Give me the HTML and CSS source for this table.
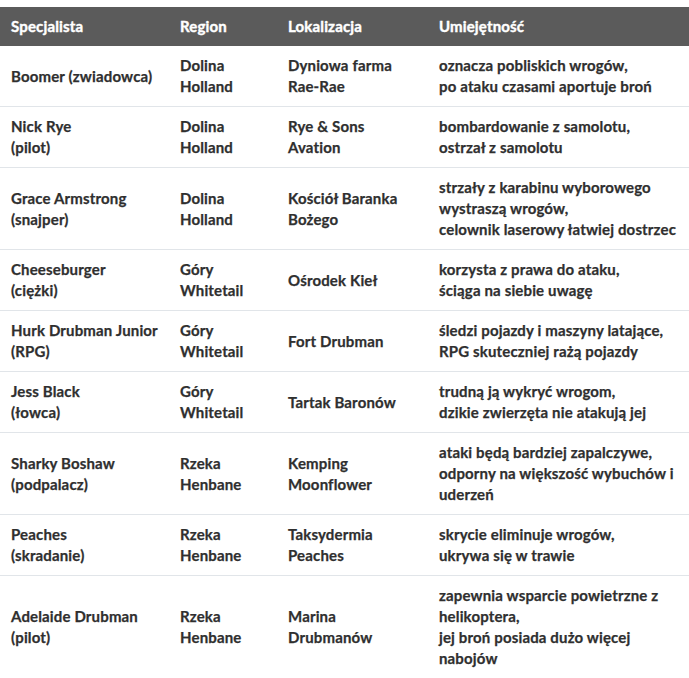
FILE: index.html
```html
<!DOCTYPE html>
<html lang="pl">
<head>
<meta charset="utf-8">
<link rel="stylesheet" href="styles.css">
</head>
<body>
<div class="page">
<table class="specs">
  <colgroup>
    <col class="c1"><col class="c2"><col class="c3"><col class="c4">
  </colgroup>
  <thead>
    <tr><th>Specjalista</th><th>Region</th><th>Lokalizacja</th><th>Umiejętność</th></tr>
  </thead>
  <tbody>
    <tr><td>Boomer (zwiadowca)</td><td>Dolina<br>Holland</td><td>Dyniowa farma<br>Rae-Rae</td><td>oznacza pobliskich wrogów,<br>po ataku czasami aportuje broń</td></tr>
    <tr><td>Nick Rye<br>(pilot)</td><td>Dolina<br>Holland</td><td>Rye &amp; Sons<br>Avation</td><td>bombardowanie z samolotu,<br>ostrzał z samolotu</td></tr>
    <tr><td>Grace Armstrong<br>(snajper)</td><td>Dolina<br>Holland</td><td>Kościół Baranka<br>Bożego</td><td>strzały z karabinu wyborowego<br>wystraszą wrogów,<br>celownik laserowy łatwiej dostrzec</td></tr>
    <tr><td>Cheeseburger<br>(ciężki)</td><td>Góry<br>Whitetail</td><td>Ośrodek Kieł</td><td>korzysta z prawa do ataku,<br>ściąga na siebie uwagę</td></tr>
    <tr><td>Hurk Drubman Junior<br>(RPG)</td><td>Góry<br>Whitetail</td><td>Fort Drubman</td><td>śledzi pojazdy i maszyny latające,<br>RPG skuteczniej rażą pojazdy</td></tr>
    <tr><td>Jess Black<br>(łowca)</td><td>Góry<br>Whitetail</td><td>Tartak Baronów</td><td>trudną ją wykryć wrogom,<br>dzikie zwierzęta nie atakują jej</td></tr>
    <tr><td>Sharky Boshaw<br>(podpalacz)</td><td>Rzeka<br>Henbane</td><td>Kemping<br>Moonflower</td><td>ataki będą bardziej zapalczywe,<br>odporny na większość wybuchów i uderzeń</td></tr>
    <tr><td>Peaches<br>(skradanie)</td><td>Rzeka<br>Henbane</td><td>Taksydermia<br>Peaches</td><td>skrycie eliminuje wrogów,<br>ukrywa się w trawie</td></tr>
    <tr><td>Adelaide Drubman<br>(pilot)</td><td>Rzeka<br>Henbane</td><td>Marina<br>Drubmanów</td><td>zapewnia wsparcie powietrzne z helikoptera,<br>jej broń posiada dużo więcej nabojów</td></tr>
  </tbody>
</table>
</div>
</body>
</html>
```
FILE: styles.css
```css
html, body {
  margin: 0;
  padding: 0;
  background: #ffffff;
}
.page {
  padding-top: 7px;
}
.specs {
  width: 689px;
  table-layout: fixed;
  border-collapse: collapse;
  font-family: Lato, "Noto Sans", sans-serif;
  font-size: 15px;
  line-height: 21px;
  color: #2f2f2f;
  letter-spacing: 0.15px;
}
.c1 { width: 169px; }
.c2 { width: 108px; }
.c3 { width: 151px; }
.c4 { width: 261px; }
.specs th {
  background: #5b5b5b;
  color: #ffffff;
  font-weight: 700;
  text-align: left;
  padding: 9px 4px 9px 11px;
  -webkit-text-stroke: 0.4px #ffffff;
}
.specs td {
  font-weight: 700;
  padding: 9px 4px 9px 11px;
  vertical-align: middle;
  border-bottom: 1px solid #e1e5e9;
  -webkit-text-stroke: 0.25px #2f2f2f;
}
```
